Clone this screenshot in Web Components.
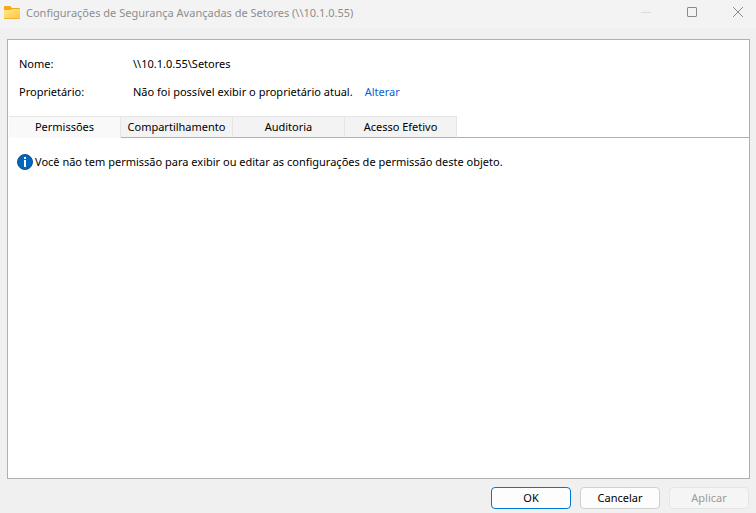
<!DOCTYPE html>
<html lang="pt-BR">
<head>
<meta charset="utf-8">
<title>Configurações de Segurança Avançadas de Setores</title>
<style>
html, body {
    height: 100%;
    margin: 0;
}
body {
    background: #f0f0f0;
    color: #000;
    font: 11px/16px "Noto Sans", "Open Sans", sans-serif;
}
</style>
</head>
<body>
<security-window>
    <title-bar slot="title">Configurações de Segurança Avançadas de Setores (\\10.1.0.55)</title-bar>
    <info-row label="Nome:">\\10.1.0.55\Setores</info-row>
    <info-row label="Proprietário:">Não foi possível exibir o proprietário atual.<link-text slot="action">Alterar</link-text></info-row>
    <tab-strip slot="tabs">
        <tab-item selected>Permissões</tab-item>
        <tab-item>Compartilhamento</tab-item>
        <tab-item>Auditoria</tab-item>
        <tab-item>Acesso Efetivo</tab-item>
    </tab-strip>
    <info-message slot="content">Você não tem permissão para exibir ou editar as configurações de permissão deste objeto.</info-message>
    <dialog-button slot="buttons" primary>OK</dialog-button>
    <dialog-button slot="buttons">Cancelar</dialog-button>
    <dialog-button slot="buttons" disabled>Aplicar</dialog-button>
</security-window>

<script>
class BaseElement extends HTMLElement
{
    constructor() {
        super()
        this._shadowRoot = this.attachShadow({ mode: 'open' })
    }
    connectedCallback(){
        this._shadowRoot.innerHTML = this.render()
    }
}

class SecurityWindow extends BaseElement
{
    render(){
        return `<style>
        :host{
            display:flex;
            flex-direction:column;
            min-height:100%;
        }
        main{
            display:flex;
            flex-direction:column;
            flex:1;
            margin:11px 6px 0 7px;
            border:1px solid #b0b0b0;
            background:#fff;
        }
        .info{
            display:flex;
            flex-direction:column;
            gap:12px;
            padding:16px 11px;
        }
        .content{
            padding:16px 9px;
        }
        footer{
            display:flex;
            justify-content:flex-end;
            gap:9px;
            padding:8px 7px 4px;
        }
        </style>
        <slot name="title"></slot>
        <main>
            <div class="info"><slot></slot></div>
            <slot name="tabs"></slot>
            <div class="content"><slot name="content"></slot></div>
        </main>
        <footer><slot name="buttons"></slot></footer>`
    }
}

class TitleBar extends BaseElement
{
    render(){
        return `<style>
        :host{
            display:block;
            background:#f3f3f3;
            color:#8e8e8e;
        }
        header{
            display:flex;
            align-items:center;
            height:28px;
            padding-left:4px;
        }
        .title{
            flex:1;
            margin:0 0 2px 6px;
            font:inherit;
        }
        svg{
            display:block;
        }
        button{
            display:flex;
            align-items:center;
            justify-content:center;
            width:46px;
            height:24px;
            margin-bottom:4px;
            padding:0;
            border:0;
            background:none;
            color:#8a8a8a;
        }
        button:disabled{
            color:#dcdcdc;
        }
        button:last-child{
            justify-content:flex-end;
            width:41px;
            padding-right:13px;
        }
        .folder{
            margin-bottom:4px;
        }
        </style>
        <header>
            <svg class="folder" width="16" height="14" viewBox="0 0 16 14" aria-hidden="true">
                <defs>
                    <linearGradient id="front" x1="0" y1="0" x2="1" y2="1">
                        <stop offset="0" stop-color="#ffe48c"/>
                        <stop offset="1" stop-color="#ffc83d"/>
                    </linearGradient>
                </defs>
                <path d="M0 2a1 1 0 0 1 1-1h5l2 2h7a1 1 0 0 1 1 1v4H0z" fill="#f2ab0c"/>
                <path d="M0 5h6l2-1h8v9a1 1 0 0 1-1 1H1a1 1 0 0 1-1-1z" fill="url(#front)"/>
                <path d="M0 13h16a1 1 0 0 1-1 1H1a1 1 0 0 1-1-1z" fill="#eeb534"/>
            </svg>
            <h1 class="title"><slot></slot></h1>
            <button disabled aria-label="Minimizar">
                <svg width="10" height="10" viewBox="0 0 10 10"><path d="M0 5.5h10" stroke="currentColor"/></svg>
            </button>
            <button aria-label="Maximizar">
                <svg width="10" height="10" viewBox="0 0 10 10"><rect x=".5" y=".5" width="9" height="9" rx=".5" fill="none" stroke="currentColor"/></svg>
            </button>
            <button aria-label="Fechar">
                <svg width="10" height="10" viewBox="0 0 10 10"><path d="M0 0l10 10M10 0L0 10" stroke="currentColor"/></svg>
            </button>
        </header>`
    }
}

class InfoRow extends BaseElement
{
    render(){
        return `<style>
        :host{
            display:block;
        }
        dl{
            display:flex;
            margin:0;
        }
        dt{
            width:114px;
        }
        dd{
            display:flex;
            gap:12px;
            margin:0;
        }
        </style>
        <dl>
            <dt>${this.getAttribute('label')}</dt>
            <dd><span><slot></slot></span><slot name="action"></slot></dd>
        </dl>`
    }
}

class LinkText extends BaseElement
{
    render(){
        return `<style>
        :host{
            display:inline;
        }
        a{
            color:#0a5fce;
            text-decoration:none;
        }
        </style>
        <a href="#"><slot></slot></a>`
    }
}

class TabStrip extends BaseElement
{
    render(){
        return `<style>
        :host{
            display:block;
        }
        .tabs{
            display:flex;
            padding-left:1px;
        }
        .tabs::after{
            content:"";
            flex:1;
            border-bottom:1px solid #b0b0b0;
        }
        </style>
        <div class="tabs" role="tablist"><slot></slot></div>`
    }
}

class TabItem extends BaseElement
{
    render(){
        const selected = this.hasAttribute('selected')
        return `<style>
        :host{
            display:block;
        }
        button{
            box-sizing:border-box;
            display:block;
            min-width:112px;
            height:22px;
            padding:0 5px;
            border:1px solid #e5e5e5;
            border-left:0;
            border-bottom-color:#b0b0b0;
            background:#f3f3f3;
            color:inherit;
            font:inherit;
            text-align:center;
        }
        button[aria-selected="true"]{
            border-bottom-color:#f9f9f9;
            background:#f9f9f9;
        }
        </style>
        <button role="tab" aria-selected="${selected}"><slot></slot></button>`
    }
}

class InfoMessage extends BaseElement
{
    render(){
        return `<style>
        :host{
            display:block;
        }
        p{
            display:flex;
            align-items:center;
            gap:2px;
            margin:0;
        }
        svg{
            flex:none;
        }
        </style>
        <p>
            <svg width="16" height="16" viewBox="0 0 16 16" aria-hidden="true">
                <circle cx="8" cy="8" r="7.5" fill="#0067c0" stroke="#1b4f83"/>
                <rect x="7" y="3" width="2" height="2" fill="#fff"/>
                <rect x="7" y="6" width="2" height="7" fill="#fff"/>
            </svg>
            <span><slot></slot></span>
        </p>`
    }
}

class DialogButton extends BaseElement
{
    render(){
        return `<style>
        :host{
            display:block;
        }
        button{
            box-sizing:border-box;
            display:block;
            min-width:80px;
            height:22px;
            padding:0 8px;
            border:1px solid #d0d0d0;
            border-radius:4px;
            background:#fdfdfd;
            color:inherit;
            font:inherit;
        }
        :host([primary]) button{
            border-color:#0078d4;
        }
        button:disabled{
            border-color:#e5e5e5;
            background:#f5f5f5;
            color:#9b9b9b;
        }
        </style>
        <button ${this.hasAttribute('disabled') ? 'disabled' : ''}><slot></slot></button>`
    }
}

window.customElements.define('security-window', SecurityWindow)
window.customElements.define('title-bar', TitleBar)
window.customElements.define('info-row', InfoRow)
window.customElements.define('link-text', LinkText)
window.customElements.define('tab-strip', TabStrip)
window.customElements.define('tab-item', TabItem)
window.customElements.define('info-message', InfoMessage)
window.customElements.define('dialog-button', DialogButton)
</script>
</body>
</html>
